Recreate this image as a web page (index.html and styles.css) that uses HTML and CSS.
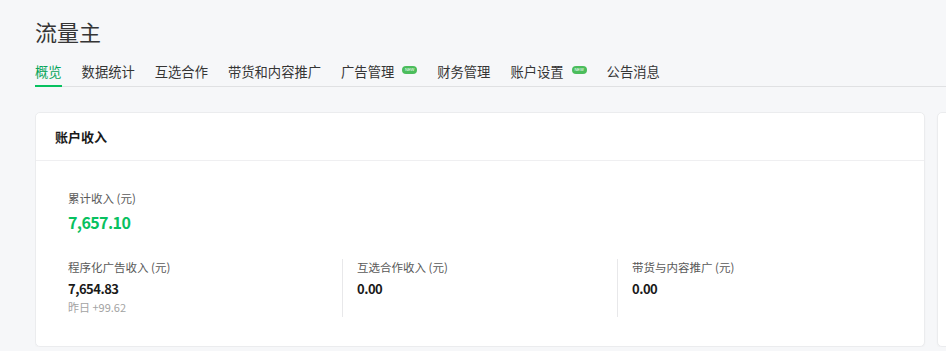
FILE: index.html
```html
<!DOCTYPE html>
<html lang="zh-CN">
<head>
    <meta charset="UTF-8">
    <title>流量主</title>
    <link rel="stylesheet" href="styles.css">
</head>
<body>
<div class="page">
    <h1 class="page-title">流量主</h1>

    <!-- Top tabs -->
    <ul class="tabs">
        <li class="tab active">概览</li>
        <li class="tab">数据统计</li>
        <li class="tab">互选合作</li>
        <li class="tab">带货和内容推广</li>
        <li class="tab">广告管理<span class="badge-new">NEW</span></li>
        <li class="tab">财务管理</li>
        <li class="tab">账户设置<span class="badge-new">NEW</span></li>
        <li class="tab">公告消息</li>
    </ul>

    <div class="cards">
        <div class="card">
            <div class="card-hd">账户收入</div>
            <div class="card-bd">
                <div class="total">
                    <div class="label">累计收入 (元)</div>
                    <div class="total-value">7,657.10</div>
                </div>
                <div class="income-row">
                    <div class="income-col">
                        <div class="label">程序化广告收入 (元)</div>
                        <div class="value">7,654.83</div>
                        <div class="sub">昨日 +99.62</div>
                    </div>
                    <div class="income-col">
                        <div class="label">互选合作收入 (元)</div>
                        <div class="value">0.00</div>
                    </div>
                    <div class="income-col">
                        <div class="label">带货与内容推广 (元)</div>
                        <div class="value">0.00</div>
                    </div>
                </div>
            </div>
        </div>
        <div class="card card-side"></div>
    </div>
</div>
</body>
</html>
```

FILE: styles.css
```css
body {
    margin: 0;
    background: #f6f7f9;
    font-family: "Noto Sans CJK SC", "Noto Sans", sans-serif;
    color: #353535;
    overflow: hidden;
}

.page {
    padding: 14px 0 0 35px;
}

.page-title {
    margin: 0;
    font-size: 22px;
    font-weight: 400;
    line-height: 34px;
    color: #353535;
}

.tabs {
    display: flex;
    gap: 20px;
    margin: 14px 0 0;
    padding: 0;
    list-style: none;
    border-bottom: 1px solid #e0e1e3;
}
.tab {
    display: flex;
    align-items: center;
    padding-bottom: 3px;
    font-size: 13.3px;
    line-height: 20px;
    color: #353535;
    border-bottom: 2px solid transparent;
    margin-bottom: -1px;
}
.tab.active {
    color: #07a55a;
    border-bottom-color: #07c160;
}

.badge-new {
    display: inline-block;
    width: 15px;
    height: 8px;
    margin-left: 8px;
    margin-top: -4px;
    border-radius: 4px;
    background: #4bbd5c;
    color: #fff;
    font-size: 4px;
    line-height: 8px;
    text-align: center;
    font-family: "Liberation Sans", sans-serif;
}

.cards {
    display: flex;
    gap: 12px;
    margin-top: 25px;
    overflow: hidden;
}

.card {
    flex: 0 0 890px;
    height: 235px;
    box-sizing: border-box;
    background: #fff;
    border: 1px solid #ebecee;
    border-radius: 5px;
    box-shadow: 0 1px 2px rgba(0,0,0,0.03);
}
.card-side {
    flex: 0 0 60px;
}

.card-hd {
    height: 47px;
    padding-left: 19px;
    line-height: 47px;
    font-size: 13px;
    font-weight: 700;
    color: #1a1a1a;
    border-bottom: 1px solid #efeff1;
}

.card-bd {
    padding: 28px 0 0 32px;
}

.label {
    font-size: 11.5px;
    line-height: 18px;
    color: #595959;
}

.total-value {
    margin-top: 3px;
    font-size: 16px;
    font-weight: 700;
    line-height: 24px;
    letter-spacing: -0.6px;
    color: #07c160;
}

.income-row {
    display: grid;
    grid-template-columns: 274px 275px 1fr;
    margin-top: 25px;
}
.income-col {
    height: 58px;
}
.income-col + .income-col {
    border-left: 1px solid #e8e8ea;
    padding-left: 14px;
}
.income-col .label {
    margin-top: -1px;
}
.value {
    margin-top: 3px;
    font-size: 13px;
    font-weight: 700;
    line-height: 19px;
    letter-spacing: -0.5px;
    color: #1a1a1a;
}
.sub {
    font-size: 11px;
    line-height: 18px;
    color: #a3a3a3;
}
```
